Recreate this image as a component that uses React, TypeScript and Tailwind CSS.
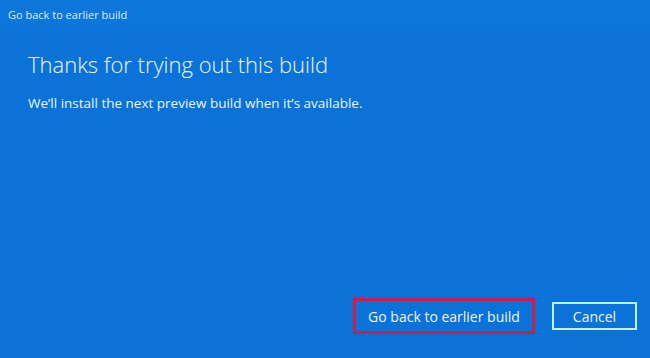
export default function App() {
  return (
    <div
      className="w-[650px] h-[358px] bg-[#0a72d8] text-white flex flex-col overflow-hidden"
      style={{ fontFamily: '"Open Sans", "Noto Sans", sans-serif' }}
    >
      {/* Title bar */}
      <div className="h-[31px] flex items-center pl-[8px] text-[11px] text-[#dbeeff] bg-[#0c76da]">
        Go back to earlier build
      </div>

      {/* Content */}
      <div className="flex-1 flex flex-col px-[28px] pt-[18px]">
        <h1 className="text-[22px] font-light leading-[30px] text-[#f2f8ff]">
          Thanks for trying out this build
        </h1>
        <p className="mt-[14px] text-[13.5px] text-[#eef6ff]">
          We’ll install the next preview build when it’s available.
        </p>
      </div>

      {/* Buttons */}
      <div className="flex justify-end items-center gap-[17px] pr-[13px] pb-[24px]">
        <div className="border-[3px] border-[#c8204a] p-[1px]">
          <button className="w-[174px] h-[28px] text-[14px] text-[#eef6ff] bg-transparent">
            Go back to earlier build
          </button>
        </div>
        <button className="w-[85px] h-[28px] border-2 border-[#bfeff7] text-[14px] text-[#eef6ff]">
          Cancel
        </button>
      </div>
    </div>
  );
}
